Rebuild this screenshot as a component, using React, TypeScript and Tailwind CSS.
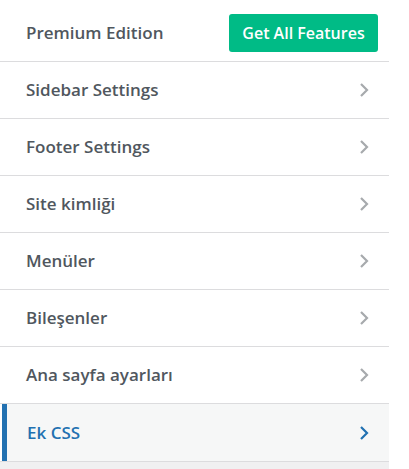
import React from "react";

const items = [
  "Sidebar Settings",
  "Footer Settings",
  "Site kimliği",
  "Menüler",
  "Bileşenler",
  "Ana sayfa ayarları",
];

function Chevron({ active }: { active?: boolean }) {
  return (
    <svg width="12" height="16" viewBox="0 0 12 16" fill="none">
      <path
        d="M3 2l6 6-6 6"
        stroke={active ? "#2271b1" : "#a7aaad"}
        strokeWidth="2.2"
      />
    </svg>
  );
}

export default function App() {
  return (
    <div className="w-[409px] h-[469px] bg-white font-['Open_Sans',sans-serif] text-[17px] font-semibold">
      <div className="w-[389px] h-full flex flex-col">
        <div className="h-[62px] flex items-center justify-between pl-[26px] pr-[11px] pt-[4px] border-b border-[#dcdcde]">
          <span className="text-[#50575e]">Premium Edition</span>
          <button className="w-[149px] h-[38px] rounded-[3px] bg-[#00bb86] text-white text-[16px] font-semibold">
            Get All Features
          </button>
        </div>
        {items.map((t) => (
          <div
            key={t}
            className="h-[57px] flex items-center justify-between pl-[26px] pr-[19px] border-b border-[#dcdcde]"
          >
            <span className="text-[#50575e]">{t}</span>
            <Chevron />
          </div>
        ))}
        <div className="pl-[2px] bg-white">
          <div className="h-[57px] flex items-center justify-between pl-[20px] pr-[19px] border-l-[5px] border-[#2271b1] bg-[#f6f7f7]">
            <span className="text-[#2271b1]">Ek CSS</span>
            <Chevron active />
          </div>
        </div>
        <div className="flex-1 border-t border-[#dcdcde] bg-[#f0f0f1]" />
      </div>
    </div>
  );
}
